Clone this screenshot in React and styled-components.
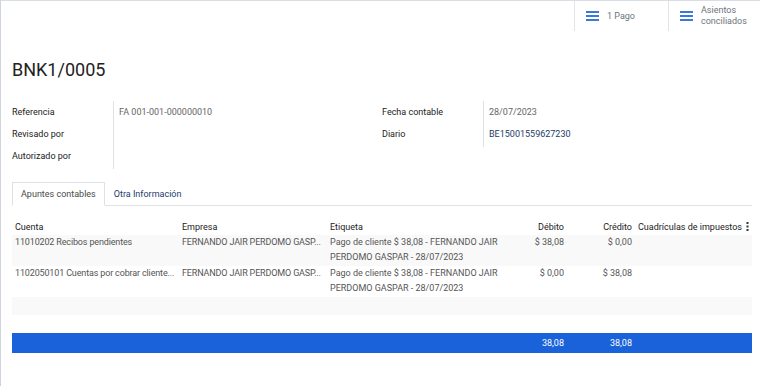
import React from "react";
import { createGlobalStyle, styled, css } from "styled-components";

const GlobalStyle = createGlobalStyle`
  html, body {
    margin: 0;
    padding: 0;
    background: #ffffff;
  }
  body {
    font-family: Roboto, "Liberation Sans", sans-serif;
    font-size: 9px;
    color: #222222;
  }
`;

const fields = {
  left: [
    { label: "Referencia", value: "FA 001-001-000000010" },
    { label: "Revisado por", value: "" },
    { label: "Autorizado por", value: "" },
  ],
  right: [
    { label: "Fecha contable", value: "28/07/2023" },
    { label: "Diario", value: "BE15001559627230", link: true },
  ],
};

const lines = [
  {
    account: "11010202 Recibos pendientes",
    partner: "FERNANDO JAIR PERDOMO GASP...",
    label: "Pago de cliente $ 38,08 - FERNANDO JAIR PERDOMO GASPAR - 28/07/2023",
    debit: "$ 38,08",
    credit: "$ 0,00",
  },
  {
    account: "1102050101 Cuentas por cobrar cliente...",
    partner: "FERNANDO JAIR PERDOMO GASP...",
    label: "Pago de cliente $ 38,08 - FERNANDO JAIR PERDOMO GASPAR - 28/07/2023",
    debit: "$ 0,00",
    credit: "$ 38,08",
  },
];

const ListIcon = () => (
  <svg width="13" height="10" viewBox="0 0 13 10">
    <rect x="0" y="0" width="13" height="2" fill="#3a78de" />
    <rect x="0" y="4" width="13" height="2" fill="#3a78de" />
    <rect x="0" y="8" width="13" height="2" fill="#3a78de" />
  </svg>
);

const KebabIcon = () => (
  <svg width="3" height="9" viewBox="0 0 3 9">
    <rect x="0.5" y="0" width="2" height="2" fill="#333" />
    <rect x="0.5" y="3.5" width="2" height="2" fill="#333" />
    <rect x="0.5" y="7" width="2" height="2" fill="#333" />
  </svg>
);

const App = () => {
  return (
    <>
      <GlobalStyle />
      <Frame>
        <ButtonBox>
          <StatButton>
            <ListIcon />
            <StatText>1 Pago</StatText>
          </StatButton>
          <StatButton>
            <ListIcon />
            <StatText>
              Asientos
              <br />
              conciliados
            </StatText>
          </StatButton>
        </ButtonBox>
        <Sheet>
          <Title>BNK1/0005</Title>
          <Groups>
            {["left", "right"].map((side) => (
              <Group key={side}>
                {fields[side].map((f) => (
                  <FieldRow key={f.label}>
                    <FieldLabel>{f.label}</FieldLabel>
                    <FieldValue $link={f.link}>{f.value}</FieldValue>
                  </FieldRow>
                ))}
                <FieldFiller />
              </Group>
            ))}
          </Groups>
          <Tabs>
            <Tab $active>Apuntes contables</Tab>
            <Tab>Otra Información</Tab>
          </Tabs>
          <Table>
            <colgroup>
              <col style={{ width: 167 }} />
              <col style={{ width: 148 }} />
              <col style={{ width: 180 }} />
              <col style={{ width: 60 }} />
              <col style={{ width: 68 }} />
              <col />
            </colgroup>
            <thead>
              <tr>
                <Th>Cuenta</Th>
                <Th>Empresa</Th>
                <Th>Etiqueta</Th>
                <Th $num>Débito</Th>
                <Th $num>Crédito</Th>
                <Th>
                  <HeadWithMenu>
                    Cuadrículas de impuestos
                    <KebabIcon />
                  </HeadWithMenu>
                </Th>
              </tr>
            </thead>
            <tbody>
              {lines.map((l, i) => (
                <Row key={i}>
                  <Td $nowrap>{l.account}</Td>
                  <Td $nowrap>{l.partner}</Td>
                  <Td>{l.label}</Td>
                  <Td $num>{l.debit}</Td>
                  <Td $num>{l.credit}</Td>
                  <Td />
                </Row>
              ))}
              <EmptyRow>
                <td colSpan={6} />
              </EmptyRow>
              <EmptyRow>
                <td colSpan={6} />
              </EmptyRow>
            </tbody>
            <tfoot>
              <TotalRow>
                <td colSpan={3} />
                <Td $num>38,08</Td>
                <Td $num>38,08</Td>
                <td />
              </TotalRow>
            </tfoot>
          </Table>
        </Sheet>
      </Frame>
    </>
  );
};

const Frame = styled.div`
  min-height: 386px;
  box-sizing: border-box;
  border-top: 1px solid #d9dee5;
  border-left: 1px solid #cdd4dd;
`;
const ButtonBox = styled.div`
  display: flex;
  justify-content: flex-end;
  height: 30px;
`;
const StatButton = styled.div`
  display: flex;
  align-items: center;
  gap: 8px;
  width: 92px;
  padding-left: 11px;
  box-sizing: border-box;
  border-left: 1px solid #e2e4e8;
  &:first-child {
    width: 94px;
  }
`;
const StatText = styled.span`
  color: #6c757d;
  font-size: 9px;
  line-height: 11px;
`;
const Sheet = styled.div`
  padding: 0 8px 0 11px;
`;
const Title = styled.h1`
  margin: 27px 0 0;
  font-size: 18px;
  font-weight: 400;
  line-height: 24px;
  color: #222222;
`;
const Groups = styled.div`
  display: grid;
  grid-template-columns: 370px 1fr;
  margin-top: 19px;
`;
const Group = styled.div`
  display: grid;
  grid-template-columns: 101px 1fr;
  align-content: start;
  height: 68px;
`;
const FieldRow = styled.div`
  display: contents;
`;
const cell = css`
  height: 22px;
  line-height: 22px;
`;
const FieldLabel = styled.div`
  ${cell};
  color: #222222;
`;
const FieldValue = styled.div`
  ${cell};
  padding-left: 5px;
  border-left: 1px solid #dee2e6;
  color: ${({ $link }) => ($link ? "#1c3a6b" : "#666666")};
`;
const FieldFiller = styled.div`
  grid-column: 2;
  border-left: 1px solid #dee2e6;
  height: 2px;
`;
const Tabs = styled.div`
  display: flex;
  margin-top: 13px;
  border-bottom: 1px solid #dee2e6;
`;
const Tab = styled.div`
  height: 22px;
  line-height: 22px;
  padding: 0 8px;
  margin-bottom: -1px;
  color: #1c3a6b;
  border: 1px solid transparent;
  ${({ $active }) =>
    $active &&
    css`
      color: #4a4a4a;
      background: #ffffff;
      border-color: #dee2e6;
      border-bottom-color: #ffffff;
    `}
`;
const Table = styled.table`
  width: 740px;
  margin-top: 12px;
  border-collapse: collapse;
  table-layout: fixed;
`;
const Th = styled.th`
  height: 17px;
  padding: 0 3px;
  font-weight: 400;
  text-align: ${({ $num }) => ($num ? "right" : "left")};
  color: #222222;
  white-space: nowrap;
`;
const HeadWithMenu = styled.div`
  display: flex;
  align-items: center;
  justify-content: space-between;
`;
const Row = styled.tr`
  &:nth-child(odd) {
    background: #f9f9f9;
  }
`;
const Td = styled.td`
  height: 31px;
  padding: 0 3px;
  vertical-align: top;
  line-height: 15px;
  color: #555555;
  text-align: ${({ $num }) => ($num ? "right" : "left")};
  white-space: ${({ $num, $nowrap }) => ($num || $nowrap ? "nowrap" : "normal")};
  overflow: hidden;
  ${({ $nowrap }) =>
    $nowrap &&
    css`
      padding-right: 0;
      letter-spacing: -0.15px;
    `}
`;
const EmptyRow = styled.tr`
  height: 18px;
  &:nth-child(odd) {
    background: #f9f9f9;
  }
`;
const TotalRow = styled.tr`
  background: #1a62d9;
  & td {
    height: 18px;
    vertical-align: middle;
    color: #ffffff;
  }
`;

export default App;
